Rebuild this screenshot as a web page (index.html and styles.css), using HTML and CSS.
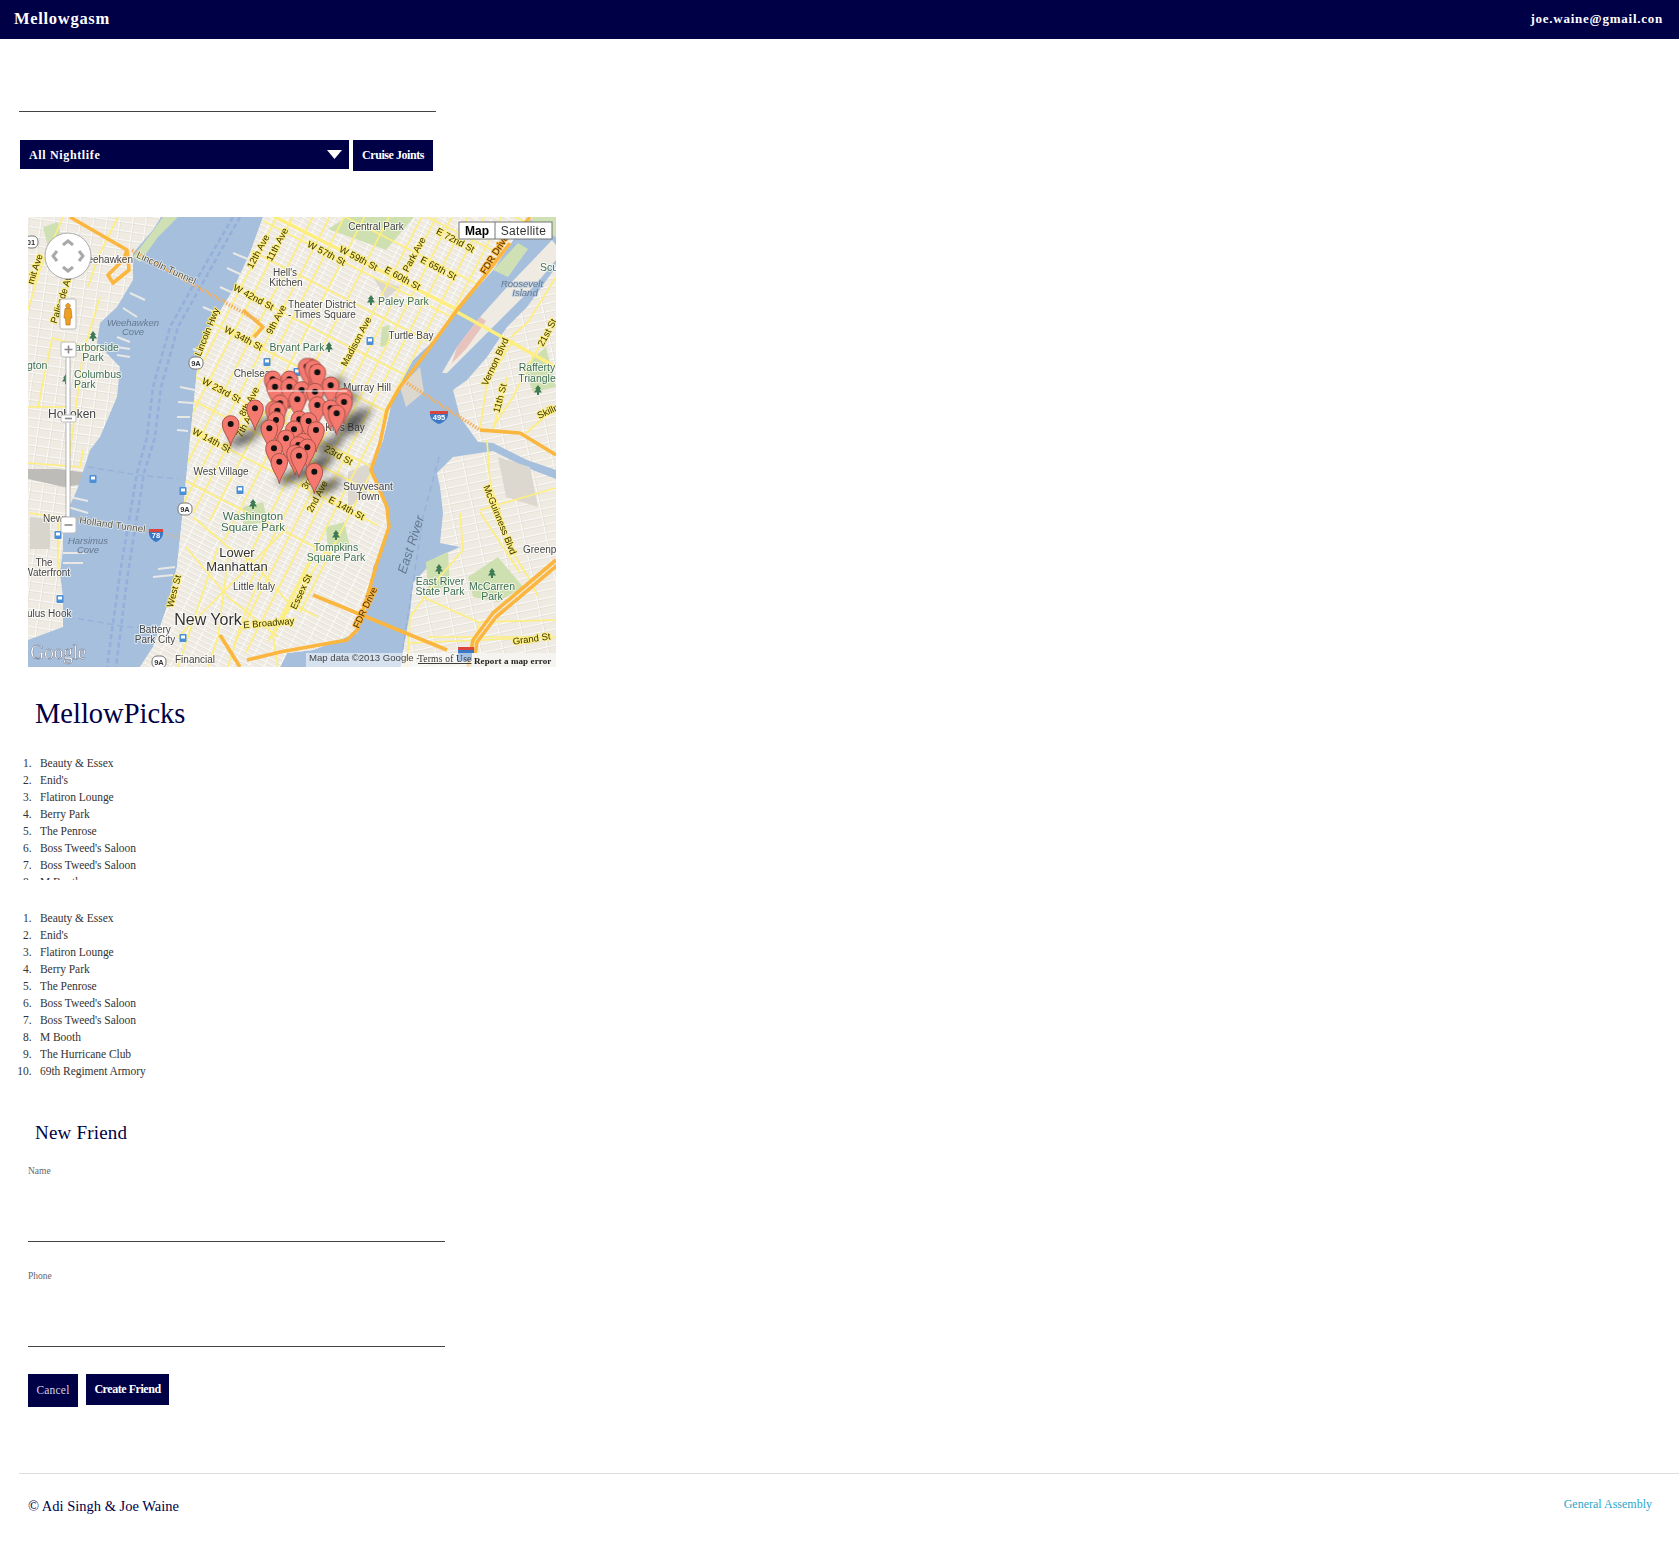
FILE: index.html
```html
<!DOCTYPE html>
<html lang="en">
<head>
<meta charset="utf-8">
<title>Mellowgasm</title>
<link rel="stylesheet" href="styles.css">
</head>
<body>
<header class="topbar">
  <a class="brand">Mellowgasm</a>
  <a class="account">joe.waine@gmail.con</a>
</header>
<main>
  <div class="search"><input class="search-input" type="text" aria-label="Search"></div>
  <div class="filter">
    <div class="select"><span>All Nightlife</span><svg class="caret" width="15" height="9" viewBox="0 0 15 9"><path d="M0 0H15L7.5 9Z" fill="#fff"/></svg></div>
    <button class="btn btn-cruise">Cruise Joints</button>
  </div>
  <div class="map">
    <svg class="map-art" width="528" height="450" viewBox="0 0 528 450" aria-label="Map of Manhattan">
      <defs>
        <pattern id="gridM" width="14" height="5.1" patternUnits="userSpaceOnUse" patternTransform="translate(300 230) rotate(27)">
          <path d="M0 .5H14M.5 0V5.1" stroke="#fff" stroke-width=".8" fill="none"/>
          <path d="M0 1.4H14" stroke="#dedad1" stroke-width=".5" fill="none"/>
        </pattern>
        <pattern id="gridJ" width="13" height="9" patternUnits="userSpaceOnUse" patternTransform="rotate(8)">
          <path d="M0 .5H13M.5 0V9" stroke="#fff" stroke-width=".8" fill="none"/>
          <path d="M0 1.5H13M1.5 0V9" stroke="#dcd8ce" stroke-width=".5" fill="none"/>
        </pattern>
        <pattern id="gridB" width="22" height="8" patternUnits="userSpaceOnUse" patternTransform="rotate(-12)">
          <path d="M0 .5H22M.5 0V8" stroke="#fff" stroke-width=".8" fill="none"/>
          <path d="M0 1.5H22M1.5 0V8" stroke="#dcd8ce" stroke-width=".5" fill="none"/>
        </pattern>
        <clipPath id="clipM"><path d="M235 0 222 36 205 73 182 110 169 153 165 193 162 223 155 293 149 350 139 390 125 430 112 450H252L259 436 285 433 329 416 342 380 345 350 359 320 359 296 344 253 355 223 365 180 385 143 409 120 429 93 465 53 485 23 505 0Z"/></clipPath>
        <filter id="soft" x="-40%" y="-40%" width="180%" height="180%"><feGaussianBlur stdDeviation="13"/></filter>
        <g id="tree"><path d="M0-6 3-2H1.6L4 1.6H1V4H-1V1.6H-4L-1.6-2H-3Z" fill="#3f7a55"/></g>
        <g id="bus"><rect x="-3.5" y="-4" width="7" height="8" rx="1" fill="#4b8fd6"/><rect x="-2" y="-2.5" width="4" height="3" fill="#fff"/></g>
        <g id="pin"><path d="M0 66C-3 44-25 24-25 0A25 25 0 0 1 25 0C25 24 3 44 0 66Z" fill="#f5796f" stroke="#a9524a" stroke-width="3"/><circle r="9" fill="#111"/></g>
        <g id="pinshadow"><ellipse cx="40" cy="44" rx="46" ry="15" transform="rotate(-24 40 44)" fill="#222"/></g>
        <g id="s9a"><rect x="-7" y="-6" width="14" height="12" rx="5" fill="#fff" stroke="#777" stroke-width="1"/><text class="shield-t" y="2.5">9A</text></g>
      </defs>
      <g class="map-base">
        <rect width="528" height="450" fill="#efebe2"/>
        <rect width="150" height="450" fill="url(#gridJ)"/>
        <rect x="370" width="158" height="450" fill="url(#gridB)"/>
        <path d="M0 252H30L60 256 64 266 36 270 0 262Z" fill="#bdbcb8"/>
        <path d="M2 300 22 302 22 332 2 332Z" fill="#d8d5cc"/>
        <path d="M15 10 30 5 34 25 20 30Z" fill="#cfe0b4"/>
        <g class="water">
          <path d="M133 0H235L222 36 205 73 182 110 169 153 165 193 162 223 155 293 149 350 139 390 125 430 112 450H0V423L35 410 35 380 32 356 35 333 35 303 49 273 62 233 72 220 89 180 92 150 69 126 72 106 89 90 105 63 105 36 125 13Z"/>
          <path d="M505 0H528V50L499 90 479 110 459 140 439 163 425 173 432 200 450 225 465 226 499 243 528 253V262L497 250 465 234 425 240 409 256 412 270 415 296 412 326 432 330 409 340 385 366 382 396 372 450H252L259 436 285 433 329 416 342 380 345 350 359 320 359 296 344 253 355 223 365 180 385 143 409 120 429 93 465 53 485 23Z"/>
        </g>
        <path class="ferry" d="M205 0 170 60 142 110 125 170 119 220 109 256 92 356 79 450M212 0 178 60 150 110 133 170 127 220 116 256 100 356 88 450"/>
        <path class="ferry-thin" d="M395 0 400 120M411 240 395 300 385 366 372 450M60 250 110 258 150 262M40 400 100 410 135 410"/>
        <path d="M414 156 429 130 452 100 479 70 505 43 524 23 528 28V43L509 66 479 96 449 126 419 156Z" fill="#efebe2"/>
        <path d="M429 130 452 100 458 104 438 132 424 146Z" fill="#e8c2bc"/>
        <path d="M500 0H528V20L512 14Z" fill="#cfe0b4"/>
        <path class="piers" d="M205 36 222 43M199 51 214 58M192 70 205 76M175 90 189 96M165 132 176 136M152 170 167 173M150 185 165 186M149 200 162 200M149 213 160 214M102 76 117 83M95 91 109 100M89 120 102 125M88 130 102 132M89 138 102 140M125 360 145 358M130 352 147 350M35 336 59 336M35 346 55 346M40 290 60 296M42 280 60 284"/>
        <path d="M105 40 125 14 135 0H150L130 20 112 45ZM465 53 490 26 500 32 480 60Z" fill="#cfe0b4"/>
        <path d="M235 0H505L485 23 465 53 429 93 409 120 385 143 365 180 355 223 344 253 359 296 359 320 345 350 342 380 329 416 285 433 259 436 252 450H112L125 430 139 390 149 350 155 293 162 223 165 193 169 153 182 110 205 73 222 36Z" fill="#efebe2"/>
        <path d="M235 0H505L485 23 465 53 429 93 409 120 385 143 365 180 355 223 344 253 359 296 359 320 345 350 342 380 329 416 285 433 259 436 252 450H112L125 430 139 390 149 350 155 293 162 223 165 193 169 153 182 110 205 73 222 36Z" fill="url(#gridM)"/>
        <path class="park" d="M319 0H386L358 33 300 12ZM215 290 235 285 240 305 215 308ZM298 310 316 305 322 330 300 335ZM440 360 470 340 495 370 470 385 445 380ZM398 345 420 335 422 370 400 372ZM495 150 518 130 528 170 505 175ZM354 110 362 108 360 128 352 130Z"/>
        <path d="M320 255 344 245 338 280 320 290ZM372 170 392 150 396 175 378 190ZM345 60 372 70 358 82ZM470 240 502 250 510 290 478 280Z" fill="#dcd8d0"/>
        <g class="roads" clip-path="url(#clipM)">
          <g transform="translate(300 230) rotate(27)">
            <path d="M-150-320V340M-136-320V340M-118-320V340M-103-320V340M-90-320V120M-72-320V120M-50-320V130M-21-320V150M-8-320V160M6-320V220M20-320V220M35-320V200M50-320V160"/>
            <path d="M-160 47H80M-160-2H90M-160-58H100M-160-99H120M-160-140H120M-160-172H130M-160-213H130M-160-250H120M-160-290H120M-160 95H60M-160 20H80"/>
            <path class="road-major" d="M-160-181H130"/>
          </g>
          <path d="M165 300 200 330 225 345 260 385 290 400M158 330 200 380 250 420M190 330 170 390 150 450M200 340 190 420 180 450M240 345 215 400 200 450M285 340 245 420 250 450M260 310 225 345 190 380 150 420M300 330 250 410"/>
        </g>
        <g class="roads">
          <path d="M485 123 459 166 452 213M479 160 465 213M528 106 505 140 485 180 465 210M528 60 500 105 483 120M459 223 462 266 485 336 502 363 510 380M432 296 435 333 409 363 382 400 379 450M395 380 452 406M452 293 528 271M452 295 492 356M379 426 528 420M528 403 452 405 445 430M528 190 498 216M400 420 528 420"/>
          <path d="M35 0 12 53 0 93M72 80 55 136 48 190 40 250M24 121 72 133M0 246 52 250 55 233M2 296 49 303M24 121 10 190M90 0 70 40 60 70M0 190 42 190M30 300 30 360"/>
          <path class="road-major" d="M429 95 528 150"/>
        </g>
        <path class="highway" d="M482 26 459 56 429 93 395 140 372 170 359 193 352 226 343 253 359 290 361 310 349 346 342 370 329 413 319 423 252 435 219 443M42 0 99 33 101 53 85 66 80 58 96 42 99 33M215 93 235 110 226 120M192 418 212 450M528 343 465 396 445 423 440 450M532 346 468 400 449 425 445 450M452 213 492 216 515 230 528 238M502 0 490 15"/>
        <path class="highway" d="M285 378 419 433"/>
        <path class="tunnel" d="M104 33 232 105M379 166 452 213"/>
        <path class="tunnel-g" d="M49 301 152 320"/>
      </g>
      <g class="map-labels">
        <text class="l ctr" x="348" y="13">Central Park</text>
        <text class="l ctr r" transform="translate(297 39) rotate(28)">W 57th St</text>
        <text class="l ctr r" transform="translate(329 44) rotate(28)">W 59th St</text>
        <text class="l ctr r" transform="translate(373 64) rotate(28)">E 60th St</text>
        <text class="l ctr r" transform="translate(409 54) rotate(28)">E 65th St</text>
        <text class="l ctr r" transform="translate(426 26) rotate(28)">E 72nd St</text>
        <text class="l ctr r" transform="translate(389 39) rotate(-62)">Park Ave</text>
        <text class="l ctr h" transform="translate(469 39) rotate(-58)">FDR Drive</text>
        <text class="l ctr it" x="494" y="70">Roosevelt</text>
        <text class="l ctr it" x="497" y="79">Island</text>
        <use href="#tree" x="343" y="84"/>
        <text class="l g" x="350" y="88">Paley Park</text>
        <text class="l ctr" x="294" y="91">Theater District</text>
        <text class="l ctr" x="294" y="101">- Times Square</text>
        <text class="l ctr" x="383" y="122">Turtle Bay</text>
        <text class="l ctr r" transform="translate(331 126) rotate(-62)">Madison Ave</text>
        <text class="l g ctr" x="269" y="134">Bryant Park</text>
        <use href="#tree" x="301" y="131"/>
        <text class="l ctr" x="339" y="174">Murray Hill</text>
        <text class="l ctr" x="317" y="214">Kips Bay</text>
        <text class="l ctr r" transform="translate(470 146) rotate(-65)">Vernon Blvd</text>
        <text class="l ctr r" transform="translate(475 182) rotate(-75)">11th St</text>
        <text class="l ctr r" transform="translate(522 117) rotate(-62)">21st St</text>
        <text class="l g ctr" x="509" y="154">Rafferty</text>
        <text class="l g ctr" x="509" y="165">Triangle</text>
        <use href="#tree" x="510" y="174"/>
        <text class="l g" x="512" y="54">Scu</text>
        <text class="l r" transform="translate(511 202) rotate(-25)">Skillm</text>
        <text class="l" x="105" y="46" text-anchor="end">Weehawken</text>
        <text class="l ctr tun" transform="translate(137 54) rotate(25)">Lincoln Tunnel</text>
        <text class="l ctr r" transform="translate(37 81) rotate(-72)">Palisade Ave</text>
        <text class="l ctr r" transform="translate(10 53) rotate(-72)">mit Ave</text>
        <g transform="translate(5 25)"><rect x="-8" y="-6" width="13" height="12" rx="5" fill="#fff" stroke="#777"/><text class="shield-t" x="-2" y="2.5">01</text></g>
        <text class="l ctr r" transform="translate(233 36) rotate(-62)">12th Ave</text>
        <text class="l ctr r" transform="translate(252 29) rotate(-62)">11th Ave</text>
        <text class="l ctr" x="257" y="59">Hell's</text>
        <text class="l ctr" x="258" y="69">Kitchen</text>
        <text class="l ctr r" transform="translate(224 83) rotate(28)">W 42nd St</text>
        <text class="l ctr r" transform="translate(214 124) rotate(28)">W 34th St</text>
        <text class="l ctr r" transform="translate(251 104) rotate(-62)">9th Ave</text>
        <text class="l ctr r" transform="translate(182 116) rotate(-68)">Lincoln Hwy</text>
        <use href="#s9a" x="168" y="146"/>
        <use href="#bus" x="239" y="145"/>
        <use href="#bus" x="342" y="124"/>
        <use href="#bus" x="269" y="155"/>
        <text class="l ctr" x="224" y="160">Chelsea</text>
        <text class="l ctr r" transform="translate(192 176) rotate(28)">W 23rd St</text>
        <text class="l ctr r" transform="translate(224 186) rotate(-62)">8th Ave</text>
        <text class="l ctr r" transform="translate(182 226) rotate(28)">W 14th St</text>
        <text class="l ctr r" transform="translate(221 207) rotate(-62)">7th Ave</text>
        <text class="l ctr it" x="105" y="109">Weehawken</text>
        <text class="l ctr it" x="105" y="118">Cove</text>
        <use href="#tree" x="65" y="120"/>
        <text class="l g ctr" x="69" y="134">arborside</text>
        <text class="l g ctr" x="65" y="144">Park</text>
        <text class="l g" x="46" y="161">Columbus</text>
        <text class="l g" x="46" y="171">Park</text>
        <use href="#tree" x="38" y="163"/>
        <text class="l g" x="-1" y="152">gton</text>
        <text class="l big" x="20" y="201">Hoboken</text>
        <use href="#bus" x="65" y="262"/>
        <use href="#bus" x="212" y="273"/>
        <use href="#bus" x="155" y="274"/>
        <use href="#bus" x="30" y="318"/>
        <use href="#bus" x="32" y="382"/>
        <use href="#bus" x="155" y="421"/>
        <text class="l ctr" x="193" y="258">West Village</text>
        <use href="#s9a" x="157" y="292"/>
        <text class="l g ctr big2" x="225" y="303">Washington</text>
        <text class="l g ctr big2" x="225" y="314">Square Park</text>
        <use href="#tree" x="225" y="288"/>
        <text class="l ctr big3" x="209" y="340">Lower</text>
        <text class="l ctr big3" x="209" y="354">Manhattan</text>
        <text class="l ctr" x="226" y="373">Little Italy</text>
        <text class="l ctr r" transform="translate(149 375) rotate(-75)">West St</text>
        <text class="l ctr ny" x="180" y="408">New York</text>
        <text class="l ctr r" transform="translate(241 409) rotate(-5)">E Broadway</text>
        <text class="l ctr" x="127" y="416">Battery</text>
        <text class="l ctr" x="127" y="426">Park City</text>
        <text class="l ctr" x="167" y="446">Financial</text>
        <use href="#s9a" x="131" y="445"/>
        <g transform="translate(128 318)"><path d="M-7-6H7C8 1 5 5 0 7-5 5-8 1-7-6Z" fill="#3b78c4"/><path d="M-7-6H7V-3H-7Z" fill="#d8463f"/><text class="shield-t w" y="3">78</text></g>
        <g transform="translate(411 200)"><path d="M-9-6H9C10 1 6 5 0 7-6 5-10 1-9-6Z" fill="#3b78c4"/><path d="M-9-6H9V-3H-9Z" fill="#d8463f"/><text class="shield-t w" y="3">495</text></g>
        <g transform="translate(438 436)"><path d="M-8-6H8V8H-8Z" fill="#3b78c4"/><path d="M-8-6H8V-3H-8Z" fill="#d8463f"/></g>
        <text class="l ctr tun" transform="translate(84 311) rotate(8)">Holland Tunnel</text>
        <text class="l" x="15" y="305">Newp</text>
        <text class="l ctr it" x="60" y="327">Harsimus</text>
        <text class="l ctr it" x="60" y="336">Cove</text>
        <text class="l ctr" x="16" y="349">The</text>
        <text class="l ctr" x="19" y="359">Waterfront</text>
        <text class="l" x="-1" y="400">ulus Hook</text>
        <text class="l ctr r" transform="translate(282 267) rotate(-62)">3rd</text>
        <text class="l ctr r" transform="translate(292 281) rotate(-62)">2nd Ave</text>
        <text class="l ctr r" transform="translate(309 241) rotate(28)">23rd St</text>
        <text class="l ctr r" transform="translate(317 294) rotate(28)">E 14th St</text>
        <text class="l ctr" x="340" y="273">Stuyvesant</text>
        <text class="l ctr" x="340" y="283">Town</text>
        <text class="l ctr it big4" transform="translate(387 329) rotate(-72)">East River</text>
        <text class="l g ctr" x="308" y="334">Tompkins</text>
        <text class="l g ctr" x="308" y="344">Square Park</text>
        <use href="#tree" x="308" y="319"/>
        <text class="l g ctr" x="464" y="373">McCarren</text>
        <text class="l g ctr" x="464" y="383">Park</text>
        <use href="#tree" x="464" y="357"/>
        <text class="l g ctr" x="412" y="368">East River</text>
        <text class="l g ctr" x="412" y="378">State Park</text>
        <use href="#tree" x="411" y="353"/>
        <text class="l ctr r" transform="translate(469 304) rotate(68)">McGuinness Blvd</text>
        <text class="l" x="495" y="336">Greenpo</text>
        <text class="l ctr r" transform="translate(276 376) rotate(-65)">Essex St</text>
        <text class="l ctr h" transform="translate(340 392) rotate(-65)">FDR Drive</text>
        <text class="l ctr r" transform="translate(504 425) rotate(-8)">Grand St</text>
      </g>
      <g transform="translate(172 123) scale(.3333)">
        <g filter="url(#soft)" opacity=".75">
          <use href="#pinshadow" x="92" y="252"/><use href="#pinshadow" x="165" y="205"/><use href="#pinshadow" x="352" y="95"/><use href="#pinshadow" x="392" y="138"/><use href="#pinshadow" x="432" y="185"/><use href="#pinshadow" x="410" y="220"/><use href="#pinshadow" x="348" y="270"/><use href="#pinshadow" x="322" y="322"/><use href="#pinshadow" x="297" y="347"/><use href="#pinshadow" x="238" y="365"/><use href="#pinshadow" x="343" y="395"/>
        </g>
        <use href="#pin" x="330" y="80"/><use href="#pin" x="320" y="80"/><use href="#pin" x="340" y="85"/><use href="#pin" x="218" y="118"/><use href="#pin" x="268" y="118"/><use href="#pin" x="225" y="140"/><use href="#pin" x="268" y="140"/><use href="#pin" x="352" y="97"/><use href="#pin" x="392" y="136"/><use href="#pin" x="305" y="150"/><use href="#pin" x="345" y="155"/><use href="#pin" x="432" y="170"/><use href="#pin" x="292" y="178"/><use href="#pin" x="432" y="186"/><use href="#pin" x="240" y="190"/><use href="#pin" x="222" y="208"/><use href="#pin" x="232" y="212"/><use href="#pin" x="352" y="195"/><use href="#pin" x="392" y="205"/><use href="#pin" x="92" y="252"/><use href="#pin" x="165" y="205"/><use href="#pin" x="410" y="220"/><use href="#pin" x="228" y="240"/><use href="#pin" x="298" y="238"/><use href="#pin" x="326" y="243"/><use href="#pin" x="208" y="265"/><use href="#pin" x="282" y="268"/><use href="#pin" x="348" y="270"/><use href="#pin" x="258" y="295"/><use href="#pin" x="310" y="305"/><use href="#pin" x="295" y="315"/><use href="#pin" x="222" y="325"/><use href="#pin" x="322" y="322"/><use href="#pin" x="285" y="340"/><use href="#pin" x="297" y="347"/><use href="#pin" x="238" y="365"/><use href="#pin" x="343" y="395"/>
      </g>
      <path d="M240 174H319" stroke="#fff" stroke-width="1"/>
      <g class="map-controls">
        <circle cx="40" cy="39" r="23" fill="#fff" stroke="#aaa" stroke-width="1"/>
        <path class="chev" d="M35 28 40 24 45 28M35 50 40 54 45 50M29 34 25 39 29 44M51 34 55 39 51 44"/>
        <rect x="32" y="82" width="16" height="30" rx="2" fill="#fff" stroke="#bbb"/>
        <path d="M40 86.5a2.3 2.3 0 1 0 .01 0ZM37 91.5H43L44 101H42.5L42 108H38L37.5 101H36Z" fill="#f0a020" stroke="#b06a10" stroke-width=".6"/>
        <rect x="38" y="140" width="4" height="160" fill="#fff" stroke="#999" stroke-width=".7"/>
        <rect x="33" y="125" width="15" height="15" rx="2" fill="#fff" stroke="#bbb"/>
        <path class="pm" d="M36.5 132.5H44.5M40.5 128.5V136.5"/>
        <rect x="33" y="198" width="15" height="7" rx="1.5" fill="#fff" stroke="#bbb"/>
        <path class="pm" d="M37 201.5H44"/>
        <rect x="33" y="300" width="15" height="16" rx="2" fill="#fff" stroke="#bbb"/>
        <path class="pm" d="M36.5 308H44.5"/>
        <rect x="431" y="5" width="93" height="17" fill="#fff" stroke="#777"/>
        <path d="M467 5V22" stroke="#777"/>
        <text class="mt-map" x="449" y="18">Map</text>
        <text class="mt-sat" x="495.5" y="18">Satellite</text>
        <text class="google" x="2" y="442">Google</text>
        <rect x="278" y="436" width="166" height="14" fill="#fff" opacity=".55"/>
        <text class="mapdata" x="281" y="444">Map data ©2013 Google -</text>
        <text class="terms" x="390" y="445">Terms of Use</text>
        <rect x="444" y="436" width="84" height="14" fill="#f5f4f0"/>
        <text class="report" x="446" y="447">Report a map error</text>
      </g>
    </svg>
  </div>
  <h2 class="picks-title">MellowPicks</h2>
  <ol class="picks picks-clipped">
    <li>Beauty &amp; Essex</li><li>Enid's</li><li>Flatiron Lounge</li><li>Berry Park</li><li>The Penrose</li><li>Boss Tweed's Saloon</li><li>Boss Tweed's Saloon</li><li>M Booth</li>
  </ol>
  <ol class="picks picks-full">
    <li>Beauty &amp; Essex</li><li>Enid's</li><li>Flatiron Lounge</li><li>Berry Park</li><li>The Penrose</li><li>Boss Tweed's Saloon</li><li>Boss Tweed's Saloon</li><li>M Booth</li><li>The Hurricane Club</li><li>69th Regiment Armory</li>
  </ol>
  <h3 class="friend-title">New Friend</h3>
  <form class="friend-form">
    <label class="field-label" for="name">Name</label>
    <input class="field" id="name" type="text">
    <label class="field-label field-label-2" for="phone">Phone</label>
    <input class="field" id="phone" type="text">
    <div class="actions">
      <a class="btn btn-cancel">Cancel</a>
      <button class="btn btn-create" type="button">Create Friend</button>
    </div>
  </form>
</main>
<footer class="footer">
  <span class="copy">© Adi Singh &amp; Joe Waine</span>
  <a class="ga">General Assembly</a>
</footer>
</body>
</html>
```
FILE: styles.css
```css
* { box-sizing: border-box; }
html, body { margin: 0; padding: 0; background: #fff; }
body { font-family: "Liberation Serif", serif; color: #222; min-height: 1554px; }

.topbar {
  height: 39px;
  background: #000046;
  color: #fff;
  display: flex;
  justify-content: space-between;
  align-items: center;
  padding: 0 16px 2px 14px;
  font-weight: 700;
}
.brand { font-size: 16.5px; letter-spacing: .7px; }
.account { font-size: 13px; letter-spacing: .75px; }

.search { margin-left: 19px; width: 417px; height: 73px; }
.search-input, .field {
  display: block;
  width: 100%;
  border: 0;
  border-bottom: 1px solid #444;
  background: transparent;
  outline: 0;
  padding: 0;
}
.search-input { height: 73px; }

.filter { display: flex; align-items: flex-start; gap: 4px; margin: 28px 0 46px 20px; }
.select {
  width: 329px;
  height: 29px;
  background: #000046;
  color: #fff;
  display: flex;
  justify-content: space-between;
  align-items: center;
  padding: 2px 7px 0 9px;
  font-size: 12px;
  font-weight: 700;
  letter-spacing: .65px;
}
.caret { display: block; margin-top: -2px; }
.btn {
  display: block;
  border: 0;
  padding: 0;
  background: #000046;
  color: #fff;
  font-family: "Liberation Serif", serif;
  font-size: 12px;
  text-align: center;
}
.btn-cruise { width: 80px; height: 31px; font-weight: 700; letter-spacing: -.45px; }

.map { margin-left: 28px; width: 528px; height: 450px; overflow: hidden; }
.map-art { display: block; }
.map-base { filter: blur(.5px); }
.map-labels { filter: blur(.25px); }
.water { fill: #a5bfdd; }
.ferry { fill: none; stroke: #8fa6da; stroke-width: 2.5; stroke-dasharray: 5 3; opacity: .7; }
.ferry-thin { fill: none; stroke: #8fa6da; stroke-width: 1.2; stroke-dasharray: 6 4; opacity: .7; }
.piers { fill: none; stroke: #e9e8e4; stroke-width: 2; }
.park { fill: #cfe0b0; }
.roads { fill: none; stroke: #fdee7f; stroke-width: 1.7; }
.road-major { stroke-width: 3.5; }
.highway { fill: none; stroke: #fbb63f; stroke-width: 3.6; stroke-linejoin: round; }
.tunnel { fill: none; stroke: #f0b060; stroke-width: 3.5; stroke-dasharray: 1.5 1.5; }
.tunnel-g { fill: none; stroke: #b8bcc0; stroke-width: 4; stroke-dasharray: 2 1; }

.l {
  font-family: "Liberation Sans", sans-serif;
  font-size: 10px;
  fill: #444;
  paint-order: stroke;
  stroke: rgba(255, 255, 255, .7);
  stroke-width: 2px;
  stroke-linejoin: round;
}
.ctr { text-anchor: middle; }
.g { fill: #3d6e52; font-size: 10.5px; }
.r { fill: #3a3300; stroke: #fdee7f; font-size: 9.5px; }
.h { fill: #4a2c00; stroke: #fbb63f; font-size: 9.5px; }
.it { font-style: italic; fill: #66788f; stroke: rgba(165, 191, 221, .5); font-size: 9.5px; }
.tun { fill: #5a5a4a; font-size: 10px; stroke-width: 1.5px; }
.big { font-size: 12px; }
.big2 { font-size: 11.5px; }
.big3 { font-size: 13px; fill: #333; }
.big4 { font-size: 13px; }
.ny { font-size: 16px; fill: #333; }
.shield-t { font-family: "Liberation Sans", sans-serif; font-size: 7.5px; font-weight: 700; fill: #333; text-anchor: middle; }
.shield-t.w { fill: #fff; }

.chev { fill: none; stroke: #a9a9a9; stroke-width: 3; }
.pm { fill: none; stroke: #888; stroke-width: 1.6; }
.mt-map, .mt-sat { font-family: "Liberation Sans", sans-serif; font-size: 12px; text-anchor: middle; }
.mt-map { font-weight: 700; fill: #000; }
.mt-sat { fill: #333; letter-spacing: .3px; }
.google {
  font-family: "Liberation Serif", serif;
  font-size: 20px;
  fill: #fff;
  stroke: #667;
  stroke-width: .4px;
  letter-spacing: -.5px;
}
.mapdata { font-family: "Liberation Sans", sans-serif; font-size: 9.6px; fill: #444; }
.terms { font-family: "Liberation Serif", serif; font-size: 9.5px; fill: #333; text-decoration: underline; letter-spacing: .2px; }
.report { font-family: "Liberation Serif", serif; font-size: 9px; font-weight: 700; fill: #222; letter-spacing: .1px; }

.picks-title {
  margin: 27px 0 21px 35px;
  font-size: 28.5px;
  line-height: 40px;
  font-weight: 400;
  color: #000046;
}
.picks {
  margin: 0;
  padding: 0 0 0 40px;
  overflow: hidden;
  font-size: 11.5px;
  line-height: 17px;
  letter-spacing: -.05px;
  color: #333;
}
.picks li::marker { content: counter(list-item) ".\00a0\00a0\00a0"; }
.picks-clipped { height: 125px; }
.picks-full { height: 170px; margin-top: 30px; }

.friend-title {
  margin: 39px 0 0 35px;
  font-size: 19px;
  line-height: 28px;
  font-weight: 400;
  letter-spacing: .2px;
  color: #000046;
}
.friend-form { margin-left: 28px; width: 417px; }
.field-label { display: block; margin-top: 18px; font-size: 9.5px; line-height: 12px; color: #666; }
.field-label-2 { margin-top: 28px; }
.field { height: 65px; }
.actions { display: flex; align-items: flex-start; gap: 8px; margin-top: 27px; }
.btn-cancel { width: 50px; height: 33px; line-height: 33px; font-size: 11.5px; color: #d4d4e4; letter-spacing: .2px; }
.btn-create { width: 83px; height: 31px; font-weight: 700; letter-spacing: -.45px; }

.footer {
  margin: 66px 0 0 19px;
  border-top: 1px solid #ddd;
  display: flex;
  justify-content: space-between;
  padding: 22px 27px 0 9px;
}
.copy { font-size: 14.5px; line-height: 18px; margin-top: 1px; color: #000046; }
.ga { font-size: 12px; line-height: 16px; color: #2ba6cb; }
```
